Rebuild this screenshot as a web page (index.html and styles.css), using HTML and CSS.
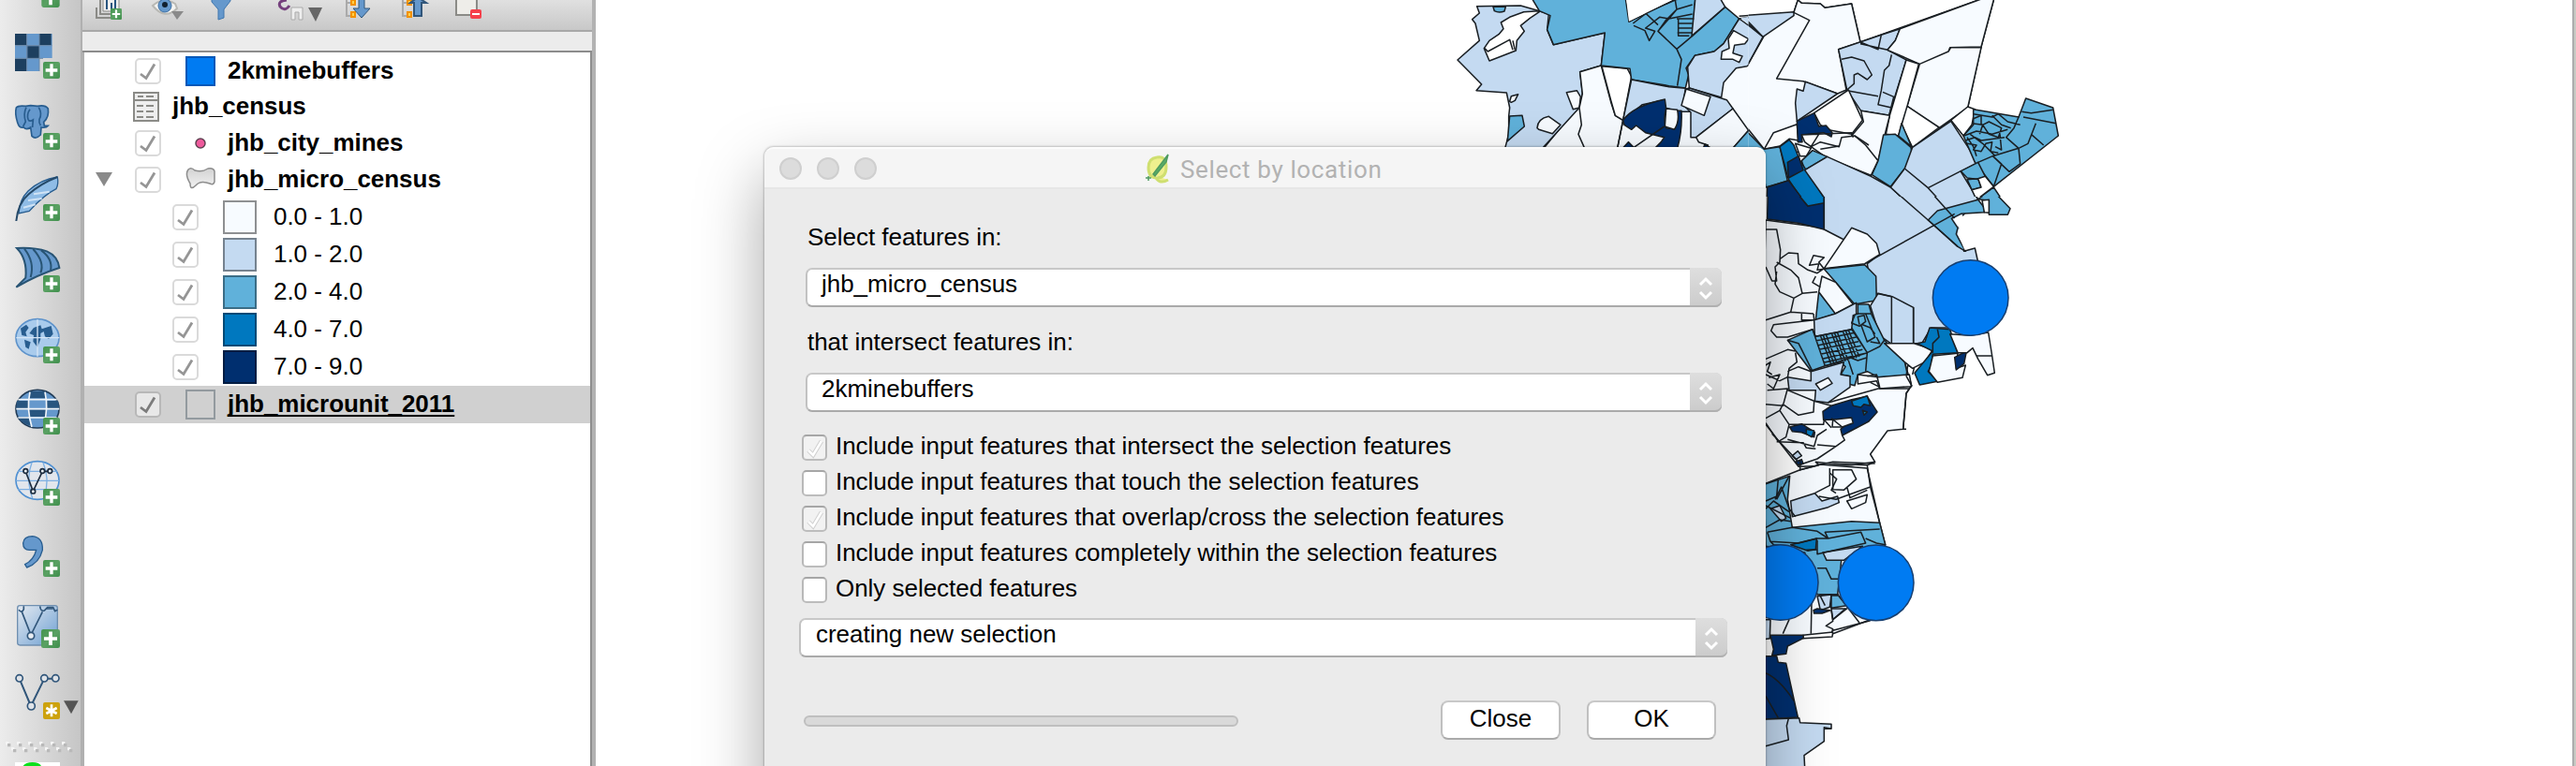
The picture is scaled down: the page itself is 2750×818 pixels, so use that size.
FILE: index.html
```html
<!DOCTYPE html>
<html lang="en">
<head>
<meta charset="utf-8">
<title>Select by location</title>
<link rel="stylesheet" href="styles.css">
</head>
<body>
<svg class="defs" width="0" height="0">
  <defs>
    <linearGradient id="green" x1="0" y1="0" x2="1" y2="1"><stop offset="0" stop-color="#43944f"/><stop offset=".5" stop-color="#5aa163"/><stop offset="1" stop-color="#3f8f4c"/></linearGradient>
    <linearGradient id="pane" x1="0" y1="0" x2="1" y2="1"><stop offset="0" stop-color="#e4eaf1"/><stop offset="1" stop-color="#6d9fd2"/></linearGradient>
    <linearGradient id="poly" x1="0" y1="0" x2="0" y2="1"><stop offset="0" stop-color="#d2d2d2"/><stop offset="1" stop-color="#f2f2f2"/></linearGradient>
    <clipPath id="west"><rect x="0" y="-10" width="980" height="500"/></clipPath>
    <clipPath id="north"><rect x="20" y="-10" width="1100" height="640"/></clipPath>
    <clipPath id="mid"><rect x="20" y="30" width="1100" height="900"/></clipPath>
    <symbol id="plus" viewBox="0 0 54 54"><rect width="54" height="54" rx="6" fill="url(#green)"/><path d="M27 7V46M8 27H46" stroke="#fff" stroke-width="10"/></symbol>
    <symbol id="updown" viewBox="0 0 34 42"><path d="M11 18l6-6 6 6M11 26l6 6 6-6" fill="none" stroke="#fff" stroke-width="3"/></symbol>
  </defs>
</svg>
<div class="app">
  <nav class="tools">
    <svg class="tool first" viewBox="0 0 264 66"><use href="#plus" x="132" y="-34" width="60" height="58"/></svg>
    <svg class="tool" viewBox="0 66 264 228"><path fill="#6598cc" d="M48 108h119v78H126v42H48z"/><path fill="#1d3f5f" d="M48 108h37v36H48zM126 108h38v36h-38zM88 148h38v38H88zM48 188h37v40H48z"/><path d="M86 108v120M126 108v120M48 146h118M48 187h90" stroke="#6b87a5" stroke-width="3"/><use href="#plus" x="138" y="198" width="54" height="54"/></svg>
    <svg class="tool" viewBox="0 294 264 228"><path d="M52 345Q58 337 82 340L98 338 120 340Q145 335 154 348Q158 375 140 391L142 403H154Q148 411 132 408L130 432Q114 448 102 436L98 408Q84 418 76 408Q62 412 56 392Q47 365 52 345Z" fill="#6598cc" stroke="#285d8f" stroke-width="5"/><path d="M84 344Q74 365 82 390L74 405M96 350Q85 365 90 382Q94 392 106 384L104 408M124 344Q136 365 126 382Q124 394 130 402" fill="none" stroke="#285d8f" stroke-width="5"/><use href="#plus" x="138" y="426" width="54" height="54"/></svg>
    <svg class="tool" viewBox="0 522 264 228"><path d="M184 567Q130 575 90 612Q62 640 60 684L94 676Q140 625 180 605Q188 590 184 567Z" fill="#8fbce6" stroke="#285d8f" stroke-width="4"/><path d="M75 665l38-10M90 642l44-6M108 622l50-8" stroke="#d0e3f5" stroke-width="6"/><path d="M52 708Q58 650 92 622Q130 588 184 567" fill="none" stroke="#264a69" stroke-width="6"/><use href="#plus" x="138" y="654" width="54" height="54"/></svg>
    <svg class="tool" viewBox="0 750 264 228"><path d="M54 795Q110 792 150 805Q185 820 190 858Q120 880 52 920L82 890Q88 830 54 795Z" fill="#6598cc" stroke="#285474" stroke-width="6"/><path d="M78 797Q112 840 98 888M106 798Q144 840 130 874M132 802Q170 830 162 866" fill="none" stroke="#285474" stroke-width="6"/><use href="#plus" x="138" y="882" width="54" height="54"/></svg>
    <svg class="tool" viewBox="0 978 264 228"><ellipse cx="120" cy="1082" rx="69" ry="60" fill="#a9cbec" stroke="#5e93cb" stroke-width="5"/><path fill="#285d8f" d="M66 1052l18-12 8 10-10 14 4 14-16-4zM78 1088l20 8-6 22-10-6zM108 1050l22-8 4 12 30-10 6 26-14 16-12-8-4-16-10 6 0 18-10 26-14-18 2-20-14-6z"/><path d="M52 1082h138M120 1024v118" stroke="#d5e5f5" stroke-width="4"/><use href="#plus" x="138" y="1110" width="54" height="54"/></svg>
    <svg class="tool" viewBox="0 6 264 228"><ellipse cx="120" cy="110" rx="69" ry="61" fill="#6598cc" stroke="#223c57" stroke-width="5"/><path fill="#28557f" d="M96 54h48l4 22H92zM54 84h38v28H52zM148 84h38l4 28h-42zM92 112h56v24H92zM56 136h36l8 28q-28-4-44-28z"/><path d="M58 80H182M52 110H190M58 138H182M96 56Q84 110 102 168M144 56Q156 110 140 160" fill="none" stroke="#f2f6fa" stroke-width="5"/><use href="#plus" x="138" y="138" width="54" height="54"/></svg>
    <svg class="tool" viewBox="0 234 264 228"><ellipse cx="120" cy="339" rx="69" ry="61" fill="#e2e6ec" stroke="#4f90d2" stroke-width="5"/><path d="M58 310H182M52 340H190M58 368H182M102 282Q82 335 104 396M138 282Q160 335 142 390" fill="none" stroke="#7fb0e2" stroke-width="4"/><path d="M82 310L106 374 136 310H158" fill="none" stroke="#1d2d40" stroke-width="5"/><g fill="#e8edf2" stroke="#1d2d40" stroke-width="5"><circle cx="82" cy="309" r="7"/><circle cx="106" cy="374" r="7"/><circle cx="136" cy="309" r="7"/><circle cx="160" cy="309" r="7"/></g><use href="#plus" x="138" y="366" width="54" height="54"/></svg>
    <svg class="tool" viewBox="0 462 264 228"><path d="M74 540Q76 518 104 518Q138 522 136 562Q126 604 86 618L80 608Q108 594 116 562H94Q74 562 74 540Z" fill="#6598cc" stroke="#285d8f" stroke-width="4"/><use href="#plus" x="138" y="594" width="54" height="54"/></svg>
    <svg class="tool" viewBox="0 690 264 228"><rect x="56" y="740" width="128" height="127" rx="8" fill="url(#pane)" stroke="#6f8fb0" stroke-width="4"/><path d="M70 760L99 834 136 760M148 750h22" fill="none" stroke="#31567a" stroke-width="5"/><g fill="#e8edf2" stroke="#31567a" stroke-width="5"><circle cx="99" cy="837" r="11"/><path fill="none" d="M60 754q10 12 16-2V742M128 742q2 18 14 14l10-10h18l6 12 8-4"/></g><use href="#plus" x="132" y="816" width="60" height="60"/></svg>
    <svg class="tool" viewBox="0 918 264 228"><path d="M62 974L99 1062 142 974H178" fill="none" stroke="#31567a" stroke-width="6"/><g fill="#dfe3e8" stroke="#31567a" stroke-width="5"><circle cx="62" cy="973" r="11"/><circle cx="100" cy="1062" r="12"/><circle cx="142" cy="973" r="11"/><circle cx="178" cy="973" r="11"/></g><rect x="138" y="1050" width="54" height="54" rx="6" fill="#cda20d"/><path d="M165 1057v39M148 1068l34 18M182 1068l-34 18" stroke="#fff" stroke-width="8"/><path fill="#555" d="M204 1045h47l-23 42z"/></svg>
    <svg class="tool last" viewBox="0 1146 264 108"><g fill="#f4f4f4"><path d="M18 1176h10v10H18zM54 1176h10v10H54zM90 1176h10v10H90zM126 1176h10v10h-10zM162 1176h10v10h-10zM198 1176h10v10h-10zM36 1194h10v10H36zM72 1194h10v10H72zM108 1194h10v10h-10zM144 1194h10v10h-10zM180 1194h10v10h-10zM216 1194h10v10h-10z"/></g><g fill="#b9b9b9"><path d="M24 1182h10v10H24zM60 1182h10v10H60zM96 1182h10v10H96zM132 1182h10v10h-10zM168 1182h10v10h-10zM204 1182h10v10h-10zM42 1200h10v10H42zM78 1200h10v10H78zM114 1200h10v10h-10zM150 1200h10v10h-10zM186 1200h10v10h-10zM222 1200h10v10h-10z"/></g><path fill="#fff" d="M48 1242h144v12H48z"/><path fill="#0be01b" d="M74 1254q8-12 30-12t28 12z"/></svg>
  </nav>

  <section class="layers">
    <header class="layer-tools">
      <svg width="54" height="32" viewBox="92 0 54 32"><path d="M107 0V15H118M103 8V19H118" fill="none" stroke="#8b8b87" stroke-width="2"/><path fill="#eee" stroke="#8b8b87" d="M110 -2h17v14h-17z"/><path d="M114 0v10M119 3v9M123 0v9" stroke="#28557f" stroke-width="2"/><use href="#plus" x="118" y="9" width="12" height="12"/></svg>
      <svg width="60" height="32" viewBox="146 0 60 32"><path d="M163 6Q174 -4 187 4L189 9Q176 22 163 6Z" fill="#f4f4f2" stroke="#b8b8b4" stroke-width="2"/><circle cx="176" cy="6" r="7" fill="#6598cc" stroke="#3c6fa4"/><circle cx="176" cy="5" r="3" fill="#102030"/><path fill="#8a8a8a" d="M183 12h13l-7 9z"/></svg>
      <svg width="70" height="32" viewBox="206 0 70 32"><path fill="#6598cc" stroke="#4076ad" d="M226 -2H246V1L239 10V19L233 21V10L226 2Z"/></svg>
      <svg width="74" height="32" viewBox="276 0 74 32"><path d="M306 0Q296 1 299 7Q304 13 309 6" fill="none" stroke="#75407d" stroke-width="3"/><path fill="#eee" stroke="#aaa" d="M311 8h12v13h-4v-8h-4v8h-4z"/><path fill="#666" d="M329 8h15l-7 15z"/></svg>
      <svg width="66" height="32" viewBox="350 0 66 32"><path d="M370 0V17H376M370 3H376" fill="none" stroke="#aaa" stroke-width="2"/><path fill="#ffd24a" stroke="#f29100" stroke-width="2" d="M375 0h4v5h-4zM375 13h4v5h-4z"/><path fill="#6598cc" stroke="#31567a" d="M383 -2h6V9h6l-9 10-9-10h6z"/></svg>
      <svg width="58" height="32" viewBox="416 0 58 32"><path d="M430 0V17H436M430 3H436" fill="none" stroke="#aaa" stroke-width="2"/><path fill="#ffd24a" stroke="#f29100" stroke-width="2" d="M435 0h4v5h-4zM435 13h4v5h-4z"/><path fill="#6598cc" stroke="#31567a" stroke-width="2" d="M442 17V3h-4l8-6 9 6h-5v14z"/></svg>
      <svg width="56" height="32" viewBox="474 0 56 32"><path fill="#eeede9" stroke="#8b8b87" stroke-width="2" d="M487 -3h22v19h-22z"/><rect x="502" y="10" width="12" height="10" rx="2" fill="#f5404b"/><path fill="#fff" d="M504 14h8v2h-8z"/></svg>
    </header>
    <div class="strip"></div>
    <div class="tree">
      <div class="row r1"><svg class="cb" viewBox="2 2 24 24"><path d="M6 17l6 4.500L21 6.500"/></svg><span class="swatch buf"></span><b>2kminebuffers</b></div>
      <div class="row r2 table"><svg class="tbl" width="28" height="32" viewBox="0 0 28 32"><path fill="#eee" stroke="#8b8b87" stroke-width="2" d="M1 1h26v30H1zM1 9h26"/><path stroke="#8b8b87" stroke-width="2" d="M5 5h6M14 5h8M4 15h7M14 15h8M4 21h7M14 21h8M4 27h7M14 27h8"/></svg><b>jhb_census</b></div>
      <div class="row r3"><svg class="cb" viewBox="2 2 24 24"><path d="M6 17l6 4.500L21 6.500"/></svg><svg class="glyph" viewBox="0 0 32 32"><circle cx="16" cy="16" r="5" fill="#ee5a9c" stroke="#5f4050" stroke-width="1.500"/></svg><b>jhb_city_mines</b></div>
      <div class="row group"><svg class="arrow" width="18" height="16" viewBox="0 0 18 16"><path fill="#8a8a8a" d="M0 0h18L9 15z"/></svg><svg class="cb" viewBox="2 2 24 24"><path d="M6 17l6 4.500L21 6.500"/></svg><svg class="glyph" viewBox="0 0 32 32"><path d="M3 5Q6 2 10 6Q18 8 24 4Q30 3 31 7V18Q30 22 26 20Q16 16 11 22Q5 28 5 20Q-1 10 3 5Z" fill="url(#poly)" stroke="#8d8d8d" stroke-width="1.500"/></svg><b>jhb_micro_census</b></div>
      <div class="row sub"><svg class="cb" viewBox="2 2 24 24"><path d="M6 17l6 4.500L21 6.500"/></svg><span class="swatch k0"></span><span>0.0 - 1.0</span></div>
      <div class="row sub"><svg class="cb" viewBox="2 2 24 24"><path d="M6 17l6 4.500L21 6.500"/></svg><span class="swatch k1"></span><span>1.0 - 2.0</span></div>
      <div class="row sub"><svg class="cb" viewBox="2 2 24 24"><path d="M6 17l6 4.500L21 6.500"/></svg><span class="swatch k2"></span><span>2.0 - 4.0</span></div>
      <div class="row sub"><svg class="cb" viewBox="2 2 24 24"><path d="M6 17l6 4.500L21 6.500"/></svg><span class="swatch k3"></span><span>4.0 - 7.0</span></div>
      <div class="row sub"><svg class="cb" viewBox="2 2 24 24"><path d="M6 17l6 4.500L21 6.500"/></svg><span class="swatch k4"></span><span>7.0 - 9.0</span></div>
      <div class="row selected"><svg class="cb" viewBox="2 2 24 24"><path d="M6 17l6 4.500L21 6.500"/></svg><span class="swatch none"></span><b>jhb_microunit_2011</b></div>
    </div>
  </section>

  <main class="canvas">
    <svg class="map" width="2110" height="818" viewBox="636 0 2110 818">
      <g transform="translate(1540 0) scale(.33333)" clip-path="url(#west)">
        <path class="c0" d="M440 230L508 210 605 255 780 285 905 250 950 60 1040 45V480H320L430 345Z"/>
        <path class="c1" d="M110 20L250 18 310 35 340 45 335 95 355 143 520 105 508 210 440 230 448 300 438 345 320 475H200L212 430V372L215 345 205 297 108 290 125 270 48 192 118 130 105 75 95 62 118 42Z"/>
        <path class="w" d="M310 35L260 38 215 55 187 72 195 92 180 110 150 130 133 155 150 195 235 162 238 130 262 100 250 82 280 58 310 38Z"/>
        <path class="l" d="M135 155L145 165 215 127 225 160M225 130L232 160"/>
        <path class="c2" d="M162 22H202L198 36Q180 42 166 35ZM215 372L255 370 262 405 208 452Z"/>
        <path class="c0" d="M215 325L220 308 242 302 232 322 220 328ZM397 296L430 290 442 310 438 345 418 350ZM303 410Q305 380 340 373L378 400 352 428 308 415Z"/>
        <path class="c0" d="M440 230L508 210 540 330 553 370 578 385 560 475H455L435 430 445 400 438 345 448 300Z"/>
        <path class="w" d="M510 212L592 220 605 245 578 385 553 370 540 325Z"/>
        <path class="c2" d="M282 -12H585L597 70 740 0 810 -12 800 115 905 22 950 60 900 140 870 165 808 178 780 218 788 240 778 282 725 275 605 255 600 220 508 210 520 105 355 143 335 95 345 50 310 35Z"/>
        <path class="c1" d="M810 -12H885L905 22 798 115Z"/>
        <path class="l" d="M610 75L655 40 745 0 750 30 725 60 695 55 650 90 680 100 662 130 648 98 612 82M725 60L690 100 750 157 800 115M690 100L715 65 750 30 800 15M750 60H805M755 75H800M755 90H800M752 105H798M755 60V115H790M650 42L690 80M725 60L800 45M750 157L765 190 752 275"/>
        <path class="w x" d="M587 -12L597 68 740 -2V-12Z"/>
        <path class="c1" d="M605 255L725 278 778 283 770 335 800 358H760L712 345 710 320 640 335 578 385Z"/>
        <path class="c1" d="M808 178L870 165 900 140 950 60 1020 110 1010 190 975 212 940 218 900 265 893 312 790 282 785 215Z"/>
        <path class="c1 x" d="M955 58L1000 50V95Z"/>
        <path class="l" d="M950 52L1000 48"/>
        <path class="w" d="M932 98L980 125 968 140 935 145 930 170 960 180 950 200 930 190 892 190 895 165 918 155 915 125Z"/>
        <path class="c1" d="M770 335L790 282 910 320 930 348 812 440 795 440 795 360Z"/>
        <path class="c0" d="M780 285L858 310 838 370 765 338ZM812 440L930 348 980 418 930 475H845L850 465 820 455Z"/>
        <path class="c4" d="M578 385Q610 340 712 318L716 348Q706 385 716 410 750 420 752 355L765 355Q768 420 752 475H680L700 455 710 440 650 425 620 402 605 415 582 400ZM577 475L595 455 612 472ZM835 475L840 462 856 472Z"/>
        <path class="c0" d="M716 348L752 352Q760 390 742 415L712 405Z"/>
        <path class="c2" d="M930 475L980 418 1030 475Z"/>
        <path class="l" d="M613 472L710 405M560 475L578 385"/>
      </g>
      <g transform="translate(1860 0) scale(.33333)" clip-path="url(#north)">
        <path class="c0" d="M0 60L68 118 15 212 0 212V390L70 478 210 490 410 565 480 600 545 475 668 385 722 345 765 150 805 0 808 -12H790L378 135 350 12 265 25 250 12 190 10 178 0 165 40Z"/>
        <path class="c1" d="M0 50L165 38V50L66 118ZM0 65L66 118 15 212 0 210Z"/>
        <path class="c0" d="M165 40L215 65 110 252 195 260 305 300 333 288 308 158 378 135 350 12 265 25 250 12 190 10 178 0Z"/>
        <path class="c1" d="M175 285L195 292 202 262 305 300 175 388 170 330ZM308 158L445 112 505 92 490 130 465 160 525 192 470 370 380 355 335 288Z"/>
        <path class="l" d="M378 135L435 158 445 112M378 140L465 160 568 205 660 165 665 152 768 150M318 190L350 183 390 195 415 240 400 255 370 235 358 240V268L335 288M478 175L470 210 455 225 445 290 435 335 478 345M335 290L435 308M450 295L485 310 470 370"/>
        <path class="c0" d="M505 92L790 -12H808L765 150 665 152 660 165 568 205 465 160 490 130ZM568 205L660 165 668 152H765L722 345 630 410 528 340Z"/>
        <path class="w" d="M525 192L565 205 528 340 500 435 460 430 472 370ZM528 340L630 408 545 472 510 400ZM668 385L722 342 745 350 735 400 708 435Z"/>
        <path class="w" d="M70 478L100 425 175 398 180 450 150 445 120 468Z"/>
        <path class="w" d="M230 362L340 288 385 385 350 430 285 418 250 400Z"/>
        <path class="c0" d="M380 355L472 370 435 515 350 435 388 390Z"/>
        <path class="c4" d="M175 388L230 362 245 405 268 402 288 425 285 438 260 425 190 432 192 455H178Z"/>
        <path class="w" d="M190 432L245 430 220 470 200 455ZM170 460L220 475 205 500 185 500Z"/>
        <path class="c0" d="M220 470L250 455 310 470 318 440 360 435 395 465 435 515 412 562 270 505Z"/>
        <path class="l" d="M240 430L350 425 355 440M250 478L310 468M360 435L405 465"/>
        <path class="c2" d="M0 425L12 418 70 478 120 470 145 580 75 600 55 475 0 475ZM190 515L225 482 272 502 200 545Z"/>
        <path class="c3" d="M120 470L150 448 165 465 185 515 260 630V660H205L148 575Z"/>
        <path class="c4" d="M145 520L180 500 195 545 148 570ZM80 600L148 578 210 660H78Z"/>
        <path class="c1" d="M200 545L272 502 412 565 475 600 540 660H262L260 630Z"/>
        <path class="c2" d="M452 432L490 430 540 472 545 500 520 540 475 598 415 560 435 515ZM510 395L500 435 542 470Z"/>
        <path class="c1" d="M545 472L668 388 755 520 700 550 755 640 725 660H540L475 600 520 540Z"/>
        <path class="l" d="M520 540L595 602 648 660M595 602L700 548"/>
        <path class="c2" d="M740 350L885 375 908 315 995 345 1012 435 805 598 745 520 708 435 740 400Z"/>
        <path class="l" d="M900 375L1005 395M895 358L925 362 995 352M885 375L870 410 845 440 885 475 915 460 940 395M925 430L965 465M885 475L890 525 855 550 802 500 885 475M755 520L802 500 830 525 805 598M740 365L800 375 820 365 850 390 890 400M770 400L790 390 830 410 820 440 790 430 770 400M710 435L750 420 800 430 850 415M715 450L745 440 765 450 840 440M720 460L750 465 740 480 765 485 780 460 800 455 795 485 820 490M735 395L770 400 760 430M730 430L770 460 810 500M800 370L830 400 860 410M740 380L765 370V400M720 440L740 470 750 500M825 430L830 480 810 470"/>
        <path class="c2" d="M700 548L755 520 778 565 760 575 720 570ZM720 575L755 572 765 600 735 608ZM680 655L750 640 805 600 845 660Z"/>
        <path class="w" d="M755 572L778 565 805 598 750 640 735 608 765 600Z"/>
      </g>
      <g transform="translate(1860 200) scale(.33333)" clip-path="url(#mid)">
        <path class="c0" d="M75 105L260 130 440 215 520 560 542 635 525 660 515 775 465 780 410 855 425 880 350 890 180 895 60 740Z"/>
        <path class="c4" d="M82 0H160L210 60 262 45V135L180 115 80 102Z"/>
        <path class="c3" d="M160 0H245L262 30V50L210 60Z"/>
        <path class="c1" d="M245 0H735L755 40 715 80 690 110 710 205 745 195 755 240 700 450 605 450 575 500 480 500 440 500 400 245 440 215 320 165 262 135V30Z"/>
        <path class="c2" d="M595 105L625 75 755 40 775 65V80L700 85 670 100 690 130 685 150 715 205 690 190ZM755 38L800 8 858 68 850 88H790V42Z"/>
        <path class="w" d="M768 42L790 40V82L775 80Z"/>
        <path class="l" d="M475 0L595 105 690 190M590 0L680 100M680 85L392 245M755 40L735 0"/>
        <path class="w x" d="M715 95L790 90V100L860 95V190L745 190 712 200 690 150 694 130 676 102 700 89Z"/>
        <path class="c0" d="M350 130L400 150 430 180 440 215 392 245 262 260Z"/>
        <path class="c2" d="M262 262L392 248 428 285 430 362 360 375 300 305ZM245 335L300 405 235 425Z"/>
        <path class="c0" d="M255 285L300 305 355 375 298 405 245 335Z"/>
        <path class="c1" d="M230 425L298 405 365 370 365 405 350 460 232 480ZM435 340L480 350 548 385V500H475L440 475 410 380Z"/>
        <path class="l" d="M478 350V500M548 385V500M430 340L478 350"/>
        <path class="c2" d="M370 375H405L415 410 455 490 520 560 530 605 435 608 400 590 370 600 360 635 340 630 345 605 315 600 330 575 315 560 265 572 220 588 145 490 225 455 235 478 350 455 355 410 370 405Z"/>
        <path class="l" d="M225 455L265 572M145 490L180 500 225 590M235 478L350 455 400 530 265 572M235 492L360 466M240 507L365 480M245 520L372 494M250 535L380 508M256 550L385 520M260 562L395 532M250 475L285 568M268 472L303 563M286 468L321 559M304 464L339 555M322 461L357 550M340 458L375 543M259 474L294 566M295 466L330 557M331 460L366 547M360 410L350 435 375 445 395 430 390 410 370 415 375 440M395 405L425 480 400 495 380 440M350 450L400 530 440 510 455 490M385 440L410 450 425 470M410 495L440 500 430 480M400 530L395 590M345 545L370 555 400 545M340 555L355 600M368 405H415"/>
        <path class="c1" d="M220 590L325 560 315 600 345 605V640L275 690 232 685 235 650 150 650 145 608 220 620Z"/>
        <path class="c0" d="M235 630L275 610 288 628 250 650ZM370 600L435 608 535 600 542 638 440 645 430 620 370 630Z"/>
        <path class="c4" d="M258 718L285 700 350 680 400 670 432 720 405 750 320 795 315 775 350 745 260 745Z"/>
        <path class="c3" d="M350 685L400 668 410 700 390 695 380 705 355 700ZM385 715L400 720 390 730Z"/>
        <path class="c0" d="M290 745L350 738 355 755 320 768H288Z"/>
        <path class="c4" d="M152 768L190 758 232 785 230 800 190 785 160 782Z"/>
        <path class="c3" d="M205 775L230 780 222 800 205 790Z"/>
        <path class="c1" d="M160 860L178 845 190 860 172 872Z"/><path class="c4" d="M170 880L190 872 195 885 180 890Z"/>
        <path class="l" d="M75 135L110 135 122 200 120 240 105 255 110 300 95 300 75 255M120 230L148 210 178 212 180 245 210 265 240 275 262 260M110 240L155 265 180 290 192 340 165 355 120 335 105 310 110 270M215 250L228 218 262 225 245 240 262 262 240 265 245 245ZM235 285L225 305 250 320M192 340L240 335M165 355L155 400 75 425M155 400L228 405M190 405V425L230 425M228 405L230 425 100 440 92 460 110 480 145 480 225 455M75 550L145 520 170 525M75 600L120 620 145 608M170 530L175 560 150 580 145 610M145 590L180 575 220 590M80 650L145 645 130 700 75 695M80 630L100 645 120 600 85 610M145 650L230 685 228 720 180 730 130 695M75 740L120 715 150 760 140 800 115 815 75 755M120 715L130 695M150 760L260 760 262 745M230 685L285 700M145 808L190 820 230 830 240 795 270 775M240 825L300 830 328 810 320 795M180 890L240 870 300 830M95 790L180 880M275 690L435 645M435 645H535M110 815L195 818 205 835 235 838M75 570L90 560 80 590 95 600"/>
        <path class="l" d="M525 605L530 570 550 580 545 600M525 605L542 635 525 660 515 775H525M400 605L430 600 440 640 410 625"/>
        <path class="c0" d="M455 500L550 500 610 520 585 560 545 580 520 560Z"/>
        <path class="c3" d="M600 450L665 455 690 530 610 535 605 570 595 590 625 622 568 633 552 595 610 525 560 500 585 495Z"/>
        <path class="c0" d="M610 540L690 532 685 580 715 570 705 610 625 625 598 590Z"/>
        <path class="c4" d="M680 545L718 525 710 565 685 585Z"/>
        <path class="c0" d="M665 470L730 475 788 465 800 540 808 595 785 602 755 550 738 515 720 530 690 530Z"/>
        <path class="l" d="M750 540H800M625 455L630 480 610 500 610 530M285 740L320 768M262 745L285 770M240 890L290 880 425 885"/>
        <circle class="buf" cx="731" cy="354" r="121"/>
      </g>
      <g transform="translate(1860 480) scale(.33333)">
        <path class="c0" d="M60 115L185 65 250 48 400 60 440 235 458 305 410 545 290 590 75 605Z"/>
        <path class="l" d="M185 35V68M185 65L245 50 235 40 280 45 400 50 425 40M400 50L410 120 440 235"/>
        <path class="c2" d="M70 112L152 85 145 160 160 250 350 230 440 235 458 305 320 330 305 465H240L200 330 75 310Z"/>
        <path class="c1" d="M155 165L232 140 255 165 305 150 310 170 275 185 160 215ZM90 190L120 180 140 220 125 230ZM258 330L385 310 325 355H270ZM240 470L285 465 280 505 250 515ZM285 510L335 510 290 545Z"/>
        <path class="c0" d="M232 140L280 115V60M335 120L345 155 400 130M335 165L400 145 395 170 350 190ZM290 65H350L365 95 325 130 290 128Z"/>
        <path class="c3" d="M155 305L238 285 235 320 210 325Z"/>
        <path class="l" d="M75 165L110 150 115 95M110 160L150 85M75 250L120 225 155 230M75 180L155 220M80 265L160 250M80 265L90 295 180 300 240 285 275 285 240 262 160 250M275 285L265 265 440 255M275 285L380 265 395 300 240 335 240 290M395 285L430 300 458 305M240 320L205 322M75 190L100 165 150 200M105 160L125 120 150 190 170 215M240 380H268L285 415H310M245 465H310M285 465V510M280 75L302 95 285 130 300 140M245 150L300 160 410 120M90 295L100 305 150 308"/>
        <path class="c2" d="M285 468H308L335 500 285 508Z"/>
        <path class="c4" d="M228 515L240 510 282 515 255 525 230 525Z"/>
        <path class="l" d="M222 485L220 590M150 545L130 590M250 470L265 500M310 470L375 555M290 545L330 510M285 515L290 550 268 565 290 575 285 590M290 580L410 548"/>
        <path class="w" d="M195 595L290 585 288 600 195 605Z"/>
        <path class="c1" d="M60 545H90L88 605 60 610Z"/>
        <path class="c4" d="M90 595H195V605L145 630 140 655 95 660 100 640ZM60 662H110L115 682 140 685 178 858 60 865Z"/>
        <path class="l" d="M70 715Q115 730 165 805M75 790L115 860"/>
        <path class="c1" d="M60 865L148 862 182 860 185 875 285 880V895L262 890V935L198 980 200 1020H60Z"/>
        <path class="l" d="M148 862L142 885 148 930 75 950M262 895H285"/>
        <circle class="buf" cx="122" cy="426" r="121"/><circle class="buf" cx="428" cy="427" r="121"/>
      </g>
    </svg>

    <div class="dialog">
      <div class="titlebar">
        <div class="lights"><i></i><i></i><i></i></div>
        <svg class="qlogo" width="26" height="32" viewBox="0 0 26 32"><path d="M12 4Q22 2 22 14Q22 26 12 26Q3 26 3 15Q3 5 12 4M9 23Q14 34 24 28" fill="#eef08e" stroke="#cfdf70" stroke-width="3"/><path d="M8 22L24 1 22 9 10 24ZM0 26h6M3 24v5" fill="#57ad66" stroke="#4f9a60" stroke-width="1.500"/></svg>
        <span class="title">Select by location</span>
      </div>
      <div class="form">
        <div class="label">Select features in:</div>
        <div class="combo"><span>jhb_micro_census</span><svg class="step"><use href="#updown"/></svg></div>
        <div class="label second">that intersect features in:</div>
        <div class="combo"><span>2kminebuffers</span><svg class="step"><use href="#updown"/></svg></div>
        <div class="checks">
          <div class="check"><svg class="box on" viewBox="2 2 23 24"><path d="M7 17l5 5 9-15" fill="none" stroke="#d0d0d0" stroke-width="4.500"/><path d="M7 17l5 5 9-15" fill="none" stroke="#fff" stroke-width="2.500"/></svg><span>Include input features that intersect the selection features</span></div>
          <div class="check"><i class="box"></i><span>Include input features that touch the selection features</span></div>
          <div class="check"><svg class="box on" viewBox="2 2 23 24"><path d="M7 17l5 5 9-15" fill="none" stroke="#d0d0d0" stroke-width="4.500"/><path d="M7 17l5 5 9-15" fill="none" stroke="#fff" stroke-width="2.500"/></svg><span>Include input features that overlap/cross the selection features</span></div>
          <div class="check"><i class="box"></i><span>Include input features completely within the selection features</span></div>
          <div class="check"><i class="box"></i><span>Only selected features</span></div>
        </div>
        <div class="combo wide"><span>creating new selection</span><svg class="step"><use href="#updown"/></svg></div>
        <div class="actions"><div class="progress"></div><button class="btn close">Close</button><button class="btn ok">OK</button></div>
      </div>
    </div>
  </main>
  <div class="edge"></div>
</div>
</body>
</html>
```
FILE: styles.css
```css
* { box-sizing: border-box; }
body { margin: 0; width: 2750px; height: 818px; overflow: hidden; background: #fff; color: #000; font: 26px/30px "Liberation Sans", Arial, sans-serif; letter-spacing: -0.03px; }
.defs { position: absolute; }
.app { display: flex; height: 818px; }
.tools { width: 90px; flex: none; display: flex; flex-direction: column; background: linear-gradient(90deg, #ececec, #c6c6c6); border-right: 4px solid #b0b0b0; }
.tool { width: 88px; height: 76px; flex: none; display: block; }
.tool.first { height: 22px; }
.tool.last { height: 36px; }
.layers { width: 548px; flex: none; display: flex; flex-direction: column; margin-left: -2px; border-right: 4px solid #b2b2b2; }
.layer-tools { height: 34px; flex: none; display: flex; padding-left: 4px; background: linear-gradient(#e0e0e0, #c8c8c8); border-bottom: 2px solid #a8a8a8; }
.layer-tools svg { flex: none; }
.strip { height: 22px; flex: none; background: #ececec; border-bottom: 2px solid #8c8c8c; }
.tree { flex: 1; background: #fff; border-left: 2px solid #b0b0b0; border-right: 2px solid #8e8e8e; }
.row { height: 40px; display: flex; align-items: center; padding-left: 54px; white-space: nowrap; }
.row b, .row > span:last-child { margin-top: -2px; }
.r1, .r3 { height: 39px; }
.r2 { height: 38px; }
.cb { width: 28px; height: 28px; flex: none; border: 2px solid #dadada; border-radius: 5px; background: #fff; }
.cb path { fill: none; stroke: #959595; stroke-width: 2.8; }
.row .swatch { width: 32px; height: 32px; flex: none; margin: 0 13px 0 26px; border: 2px solid #0258b8; }
.row .glyph { width: 32px; height: 32px; flex: none; margin: 0 13px 0 26px; }
.table { padding-left: 52px; }
.tbl { margin-right: 14px; }
.group { padding-left: 12px; }
.arrow { margin-right: 24px; }
.sub { padding-left: 94px; }
.row.sub .swatch { width: 36px; height: 36px; margin-right: 18px; }
.row .swatch.buf { background: #007bf2; }
.row .swatch.k0 { background: #f7fbff; border-color: #8e9092; }
.row .swatch.k1 { background: #c4daf1; border-color: #75828f; }
.row .swatch.k2 { background: #60b1da; border-color: #3b6d86; }
.row .swatch.k3 { background: #0078bf; border-color: #004a76; }
.row .swatch.k4 { background: #002f6f; border-color: #001c42; }
.row .swatch.none { border-color: #939a9f; }
.selected { background: #d0d0d0; }
.selected b { text-decoration: underline; text-decoration-skip-ink: none; text-decoration-thickness: 2px; text-underline-offset: 3px; }
.selected .cb { background: #e8e8e8; border-color: #b8b8b8; }
.selected .cb path { stroke: #7c7c7c; }
.canvas { position: relative; width: 2110px; flex: none; overflow: hidden; background: #fff; }
.map { display: block; }
.map path, .map circle { stroke: #1a1f23; stroke-width: 4.6; stroke-linejoin: round; }
.map .w { fill: #fff; }
.map .c0 { fill: #f7fbff; }
.map .c1 { fill: #c4daf1; }
.map .c2 { fill: #60b1da; }
.map .c3 { fill: #0078bf; }
.map .c4 { fill: #002f6f; }
.map .l { fill: none; }
.map path.x { stroke: none; }
.map .buf { fill: #007bf2; stroke: #173f70; }
.dialog { position: absolute; left: 180px; top: 157px; width: 1069px; height: 780px; background: #ebebeb; border-radius: 10px; box-shadow: 0 0 2px 1px rgba(0,0,0,.2), 0 30px 70px rgba(0,0,0,.35); white-space: nowrap; }
.titlebar { height: 45px; display: flex; align-items: center; border-radius: 10px 10px 0 0; background: #f5f5f5; border-bottom: 2px solid #e6e6e6; border-top: 2px solid #fcfcfc; color: #b2b2b2; }
.lights { display: flex; gap: 16px; padding-left: 16px; }
.lights i { width: 24px; height: 24px; border-radius: 50%; background: #dcdcdc; border: 2px solid #cfcfcf; }
.qlogo { margin-left: 287px; }
.title { margin: 2px 0 0 11px; font: 26px/30px Roboto, sans-serif; letter-spacing: .63px; }
.form { padding: 36px 47px 0 44px; }
.label { height: 30px; margin-bottom: 18px; padding-left: 2px; }
.label.second { margin-top: 22px; padding-top: 0; }
.combo { height: 42px; display: flex; justify-content: space-between; background: #fff; border: 2px solid; border-color: #c8c8c8 #c2c2c2 #aaa; border-radius: 7px; padding-left: 15px; }
.step { width: 34px; height: 42px; margin: -2px -2px 0 0; flex: none; background: linear-gradient(#dedede, #cbcbcb); border-radius: 0 7px 7px 0; box-shadow: inset 0 -2px #b0b0b0; }
.checks { margin: 24px 0 0 -4px; display: flex; flex-direction: column; gap: 10px; }
.check { height: 28px; display: flex; }
.check span { margin: -3px 0 0 9px; }
.box { width: 27px; height: 28px; flex: none; background: #fff; border: 2px solid; border-color: #a6a6a6 #b8b8b8 #bcbcbc; border-radius: 5px; }
.box.on { background: #f2f2f2; }
.label.second + .combo { margin-top: -2px; height: 42px; }
.label.second { height: 32px; }
.combo.wide { margin: 16px -6px 0 -7px; padding-left: 16px; }
.actions { display: flex; align-items: flex-start; margin-top: 46px; }
.progress { width: 464px; height: 12px; margin: 16px 216px 0 -2px; background: #d9d9d9; border: 2px solid #bfbfbf; border-radius: 6px; }
.btn { height: 42px; padding: 0 0 4px; background: #fff; border: 2px solid; border-color: #c8c8c8 #c0c0c0 #aaa; border-radius: 8px; font: inherit; letter-spacing: inherit; color: #000; }
.close { width: 128px; margin-right: 28px; }
.ok { width: 138px; }
.edge { flex: 1; background: #c8cac4; border-left: 2px solid #adadad; }
```
